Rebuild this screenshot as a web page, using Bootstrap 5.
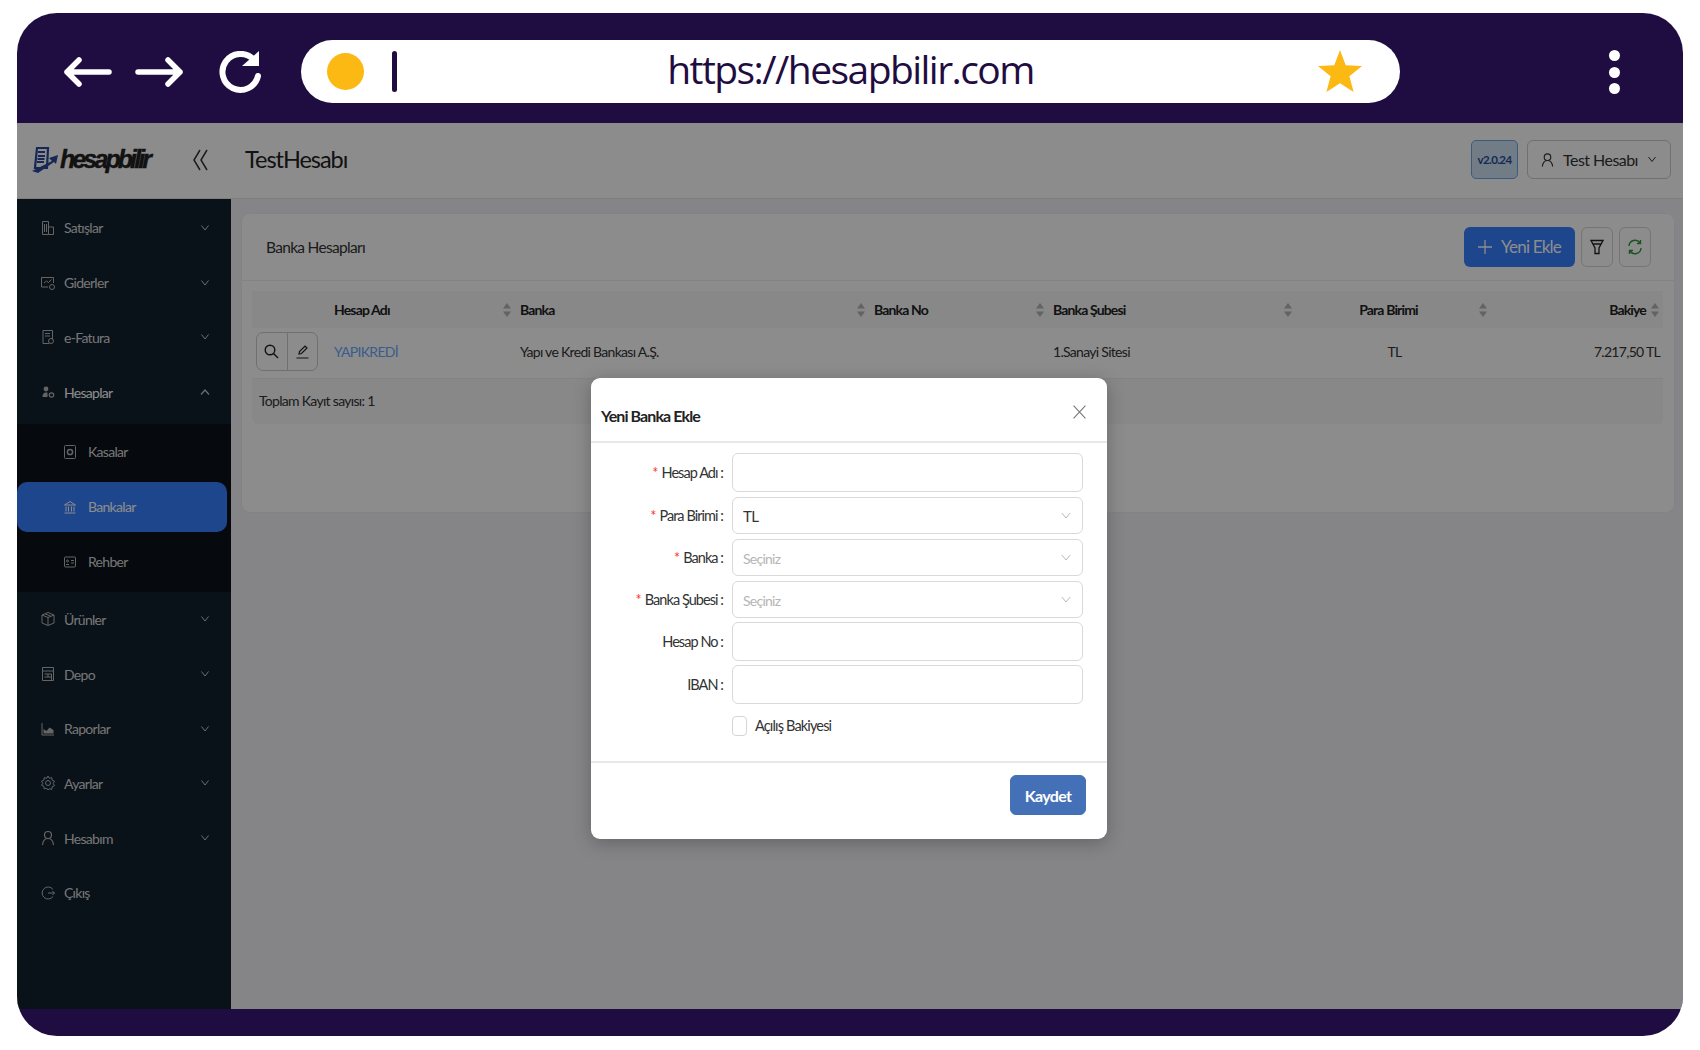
<!doctype html>
<html lang="tr">
<head>
<meta charset="utf-8">
<title>hesapbilir</title>
<link href="https://cdn.jsdelivr.net/npm/bootstrap@5.3.0/dist/css/bootstrap.min.css" rel="stylesheet">
<style>
html,body{height:100%}
body{background:#fff;padding:13px 17px 14px;font-family:Lato,"Liberation Sans",sans-serif;font-size:14px;letter-spacing:-.7px;color:#222;overflow:hidden}
.frame{height:1023px;background:#1f0d42;border-radius:40px;overflow:hidden}
.chrome{height:110px;padding:27px 0 0 47px}
.nav-ico{display:block}
.addr{width:1099px;height:63px;margin-left:39px;background:#fff;border-radius:32px;padding:0 0 0 26px;position:relative}
.dot-y{width:37px;height:37px;border-radius:50%;background:#fdb913}
.caret-v{width:5px;height:41px;border-radius:3px;background:#1f0d42;margin-left:28px}
.url{position:absolute;left:0;right:0;top:0;bottom:0;margin:0;text-align:center;line-height:57px;font-family:"Open Sans",sans-serif;font-size:39px;letter-spacing:-1.55px;color:#1f0d42}
.star-b{position:absolute;left:1016px;top:8px}
.kebab{margin-left:209px;padding-top:10px}
.kebab span{display:block;width:11px;height:11px;border-radius:50%;background:#fff;margin-bottom:5.5px}
.app{height:886px;position:relative;background:#f2f2f6}
.dim{position:absolute;inset:0;background:rgba(0,0,0,.45);z-index:5}
.topbar{height:76px;background:#fff;border-bottom:1px solid #e5e5e5;padding:0 12px 2px 15px}
.logo-txt{font-family:"Liberation Sans",sans-serif;font-weight:700;font-style:italic;font-size:25px;letter-spacing:-2.9px;color:#222;margin-left:2px;line-height:1;-webkit-text-stroke:.4px #222}
.collapse-ico{margin-left:43px}
.org{margin-left:36px;font-size:23.5px;letter-spacing:-1.05px;font-weight:400;color:#222}
.ver{width:47px;height:39px;border:1px solid #6ea8e0;border-radius:5px;background:#cfe2f5;color:#2a4a9a;font-size:11.5px;font-weight:700;letter-spacing:-.6px}
.user-btn{width:144px;height:39px;margin-left:9px;border:1px solid #ccc;border-radius:6px;font-size:16px;letter-spacing:-.55px;color:#333;background:#fff}
.side{width:214px;background:#12202f;padding-top:1.5px;color:#d8d8d8;font-size:14px}
.mi{height:54.7px;padding:0 20px 0 23px}
.mi svg.ico{margin-right:8px;color:#b9b9b9}
.mi.open{color:#fff;height:59.500px;padding-bottom:4px}
.sub{background:#0b1219;padding:3px 0 0;height:168px}
.si{height:50px;margin:0 4px 5px 0;padding:0 0 1px 47px;border-radius:10px}
.si svg{margin-right:12px;color:#b9b9b9}
.si.active{background:#3880ff;color:#fff}
.si.active svg{color:#fff}
.chev{margin-left:auto;color:#c8c8c8}
.main-a{padding:14px 8px 0 10px}
.panel{height:300px;background:#fff;border:1px solid #eee;border-radius:9px}
.panel-h{height:67px;padding:0 23px 2px 24px;border-bottom:1px solid #eee}
.panel-t{font-size:15.5px;letter-spacing:-.7px;color:#333;margin-top:3px}
.new-btn{width:111px;height:40px;background:#3880ff;color:#fff;border-radius:6px;font-size:17px;letter-spacing:-.8px;margin-top:2px}
.new-btn svg{margin-right:9px}
.sq-btn{width:32px;height:40px;border:1px solid #d5d5d5;border-radius:6px;background:#fff;margin:2px 0 0 6px}
.tbl-w{padding:10px 11px 0 10px}
table.tb{table-layout:fixed;width:1411px;margin:0;font-size:14px}
table.tb th{height:37px;background:#f7f7f7;font-weight:700;padding:0 5px;vertical-align:middle;border:0;color:#222;position:relative;font-size:14px;letter-spacing:-.85px}
table.tb td{height:50px;padding:0 5px 2px;vertical-align:middle;border-bottom:1px solid #eee;color:#333}
table.tb td.lnk{color:#6aa8ff}
.sort{position:absolute;right:4px;top:12px;display:block}
.acts{width:62px;height:39px;border:1px solid #ccc;border-radius:7px;margin-left:-1px}
.acts span{flex:1;height:100%}
.acts span+span{border-left:1px solid #ccc}
.tot{height:45px;background:#f7f7f7;padding:0 7px 2px;border-radius:0 0 6px 6px;font-size:14px;color:#333}
.dlg{position:absolute;left:574px;top:255px;width:516px;height:461px;z-index:6;background:#fff;border:0;border-radius:9px;box-shadow:0 4px 18px rgba(0,0,0,.25)}
.dlg .modal-header{height:65px;padding:0 0 0 10px;border-bottom:2px solid #e8e8e8;align-items:flex-start}
.dlg .modal-title{font-size:16px;font-weight:700;letter-spacing:-.9px;color:#222;margin-top:26px;line-height:24px}
.x-btn{margin:27px 21px 0 auto;border:0;background:none;padding:0;line-height:0}
.dlg .modal-body{height:318px;flex:none;padding:10px 23px 0 0}
.fr{margin:0 0 5px;align-items:center}
.fr.tight{margin-bottom:4px}
.fl{width:132px;padding:0;flex:none;text-align:right;font-size:14.5px;letter-spacing:-.95px;color:#333}
.fl i{color:#f33;font-style:normal;margin-right:4px}
.fv{width:351px;margin-left:9px;padding:0;flex:none}
.fv .form-control{height:39px;border:1px solid #d9d9d9;border-radius:6px;padding:0 11px}
.fv .form-select{height:37px;border:1px solid #d9d9d9;border-radius:6px;padding:2px 10px 0;font-size:15px;letter-spacing:-.5px;color:#333;
background-image:url("data:image/svg+xml,%3Csvg xmlns='http://www.w3.org/2000/svg' viewBox='0 0 12 8'%3E%3Cpath d='M1 1l5 6 5-6' fill='none' stroke='%23aaa' stroke-width='1'/%3E%3C/svg%3E");background-size:10px 7px;background-position:right 11px center}
.fv .form-select.ph{color:#b5b5b5;font-size:14px;letter-spacing:-.75px}
.cb-row{margin:12px 0 0 141px;height:20px}
.cb-row .form-check-input{width:15px;height:20px;margin:0;border:1px solid #d5d5d5;border-radius:4px;float:none}
.cb-row label{margin-left:8px;font-size:14.5px;letter-spacing:-.85px;color:#333}
.dlg .modal-footer{border-top:2px solid #e8e8e8;padding:12px 21px 0 0;height:78px;align-items:flex-start;flex:none}
.save-b{width:76px;height:40px;margin:0;padding:2px 0 0;background:#4470b8;border-color:#4470b8;font-size:16px;letter-spacing:-.7px;font-weight:700;border-radius:6px}
.bot{height:27px}
</style>
</head>
<body>
<svg width="0" height="0" class="position-absolute">
<defs>
<symbol id="i-ch" viewBox="0 0 12 8"><path d="M2.500 1.500l3.500 4.500 3.500-4.500" fill="none" stroke="currentColor" stroke-width="1"/></symbol>
<symbol id="i-up" viewBox="0 0 12 8"><path d="M2 6.500l4-4.500 4 4.500" fill="none" stroke="currentColor" stroke-width="1.200"/></symbol>
<symbol id="i-sort" viewBox="0 0 8 14"><path d="M4 0l4 5.500H0zM4 14L0 8.500h8z" fill="#b5b5b5"/></symbol>
<symbol id="i-user" viewBox="0 0 16 16"><circle cx="8" cy="5" r="3.500" fill="none" stroke="currentColor" stroke-width="1.200"/><path d="M2.500 15c.4-4 2.300-6.500 5.500-6.500s5.100 2.500 5.500 6.500" fill="none" stroke="currentColor" stroke-width="1.200"/></symbol>
</defs>
</svg>
<div class="frame d-flex flex-column">
  <div class="chrome d-flex align-items-start">
    <svg class="nav-ico" width="48" height="30" viewBox="0 0 48 30" style="margin-top:17px"><path d="M15 3L3 15l12 12M3 15h42" fill="none" stroke="#fff" stroke-width="5.500" stroke-linecap="round" stroke-linejoin="round"/></svg>
    <svg class="nav-ico" width="48" height="30" viewBox="0 0 48 30" style="margin:17px 0 0 23px"><path d="M33 3l12 12-12 12M45 15H3" fill="none" stroke="#fff" stroke-width="5.500" stroke-linecap="round" stroke-linejoin="round"/></svg>
    <svg class="nav-ico" width="44" height="42" viewBox="0 0 44 42" style="margin:11px 0 0 35px"><path d="M36 9A18 18 0 1 0 40 25" fill="none" stroke="#fff" stroke-width="6" stroke-linecap="round"/><path d="M24 15h17V0z" fill="#fff"/></svg>
    <div class="addr d-flex align-items-center">
      <div class="dot-y"></div>
      <div class="caret-v"></div>
      <p class="url">https://hesapbilir.com</p>
      <svg class="star-b" width="46" height="46" viewBox="0 0 24 24"><path d="M12 1l3 8 8.500.4-6.600 5.400 2.200 8.200L12 18.400 4.900 23l2.200-8.200L.5 9.400 9 9z" fill="#fdb913"/></svg>
    </div>
    <div class="kebab"><span></span><span></span><span></span></div>
  </div>
  <div class="app d-flex flex-column">
    <div class="topbar d-flex align-items-center flex-shrink-0">
      <svg width="26" height="28" viewBox="0 0 26 28"><path d="M5 2h11l-1 20H3z" fill="none" stroke="#2a4a9a" stroke-width="2.200"/><path d="M6 6h7M6 10h7M5.500 13h7M5 16h7" stroke="#2a4a9a" stroke-width="1.800"/><path d="M0 25l20-10-3-3 9-3-2 9-2-2-16 11z" fill="#2a4a9a"/></svg>
      <span class="logo-txt">hesapbilir</span>
      <svg class="collapse-ico" width="17" height="22" viewBox="0 0 17 22"><path d="M8 1L2 11l6 10M15 1L9 11l6 10" fill="none" stroke="#333" stroke-width="1.500"/></svg>
      <span class="org">TestHesabı</span>
      <div class="ver ms-auto d-flex align-items-center justify-content-center">v2.0.24</div>
      <div class="user-btn d-flex align-items-center justify-content-center"><svg width="15" height="16" class="me-2"><use href="#i-user"/></svg>Test Hesabı<svg width="12" height="9" class="ms-2"><use href="#i-ch"/></svg></div>
    </div>
    <div class="d-flex flex-grow-1" style="min-height:0">
      <nav class="side flex-shrink-0">
        <div class="mi d-flex align-items-center"><svg class="ico" width="16" height="16" viewBox="0 0 16 16" fill="none" stroke="currentColor"><path d="M2.500 1.500h6v13h-6zM8.500 7h5v7.500h-5M4.500 4v8M6.500 4v8"/></svg>Satışlar<svg class="chev" width="12" height="8"><use href="#i-ch"/></svg></div>
        <div class="mi d-flex align-items-center"><svg class="ico" width="16" height="16" viewBox="0 0 16 16" fill="none" stroke="currentColor"><path d="M8 12H1.500V2.500h12V8M4 8l2.500-2 2 1.500 3-3"/><circle cx="12" cy="12" r="2.500"/></svg>Giderler<svg class="chev" width="12" height="8"><use href="#i-ch"/></svg></div>
        <div class="mi d-flex align-items-center"><svg class="ico" width="16" height="16" viewBox="0 0 16 16" fill="none" stroke="currentColor"><path d="M9 14.500H3v-13h9.500V10M5 4.500h5M5 7h5"/><circle cx="11" cy="12" r="2.500"/></svg>e-Fatura<svg class="chev" width="12" height="8"><use href="#i-ch"/></svg></div>
        <div class="mi open d-flex align-items-center"><svg class="ico" width="16" height="16" viewBox="0 0 16 16" fill="currentColor"><circle cx="6" cy="5" r="2.400"/><path d="M2.500 13c0-3 1.200-4.500 3.500-4.500.8 0 1.500.2 1.500.2V13z"/><circle cx="11.500" cy="11" r="2.200" fill="none" stroke="currentColor" stroke-width="1.200"/></svg>Hesaplar<svg class="chev" width="12" height="8"><use href="#i-up"/></svg></div>
        <div class="sub">
          <div class="si d-flex align-items-center"><svg width="12" height="14" viewBox="0 0 12 14" fill="none" stroke="currentColor"><rect x=".5" y=".5" width="11" height="13" rx="1"/><circle cx="6" cy="7" r="2.600" stroke-width="1.500"/></svg>Kasalar</div>
          <div class="si active d-flex align-items-center"><svg width="12" height="14" viewBox="0 0 12 14" fill="none" stroke="currentColor"><path d="M.5 5L6 1.500 11.500 5zM2 6.500v5M4.500 6.500v5M7.500 6.500v5M10 6.500v5M.5 13h11"/></svg>Bankalar</div>
          <div class="si d-flex align-items-center"><svg width="12" height="14" viewBox="0 0 12 14" fill="none" stroke="currentColor"><rect x=".5" y="2" width="11" height="10" rx="1"/><circle cx="3.500" cy="6" r="1"/><path d="M2 9.500h3M7 5.500h3M7 8h3"/></svg>Rehber</div>
        </div>
        <div class="mi d-flex align-items-center"><svg class="ico" width="16" height="16" viewBox="0 0 16 16" fill="none" stroke="currentColor"><path d="M8 1.500l6 2.500v8l-6 2.500L2 12V4zM2 4l6 2.500L14 4M8 6.500v8M5 2.800l6 2.500"/></svg>Ürünler<svg class="chev" width="12" height="8"><use href="#i-ch"/></svg></div>
        <div class="mi d-flex align-items-center"><svg class="ico" width="16" height="16" viewBox="0 0 16 16" fill="none" stroke="currentColor"><path d="M2.500 1.500h11v13h-11zM2.500 5h11M4.500 8h7v6.500h-7M8 8v3M4.500 11h7"/></svg>Depo<svg class="chev" width="12" height="8"><use href="#i-ch"/></svg></div>
        <div class="mi d-flex align-items-center"><svg class="ico" width="16" height="16" viewBox="0 0 16 16" fill="currentColor"><path d="M2 2v12h12" fill="none" stroke="currentColor"/><path d="M3.500 12.500V8l3 2 3-3.500 4 2.500v3.500z"/></svg>Raporlar<svg class="chev" width="12" height="8"><use href="#i-ch"/></svg></div>
        <div class="mi d-flex align-items-center"><svg class="ico" width="16" height="16" viewBox="0 0 16 16" fill="none" stroke="currentColor"><path d="M8 1l1.200 2.200 2.600-.5.300 2.500 2.400 1.100L13.200 8.500l1.300 2.200-2.400 1.100-.3 2.500-2.600-.5L8 15l-1.200-1.700-2.600.5-.3-2.500-2.400-1.100L2.800 8.500 1.500 6.300l2.400-1.100.3-2.500 2.600.5z"/><circle cx="8" cy="8" r="2.500"/></svg>Ayarlar<svg class="chev" width="12" height="8"><use href="#i-ch"/></svg></div>
        <div class="mi d-flex align-items-center"><svg class="ico" width="16" height="16"><use href="#i-user"/></svg>Hesabım<svg class="chev" width="12" height="8"><use href="#i-ch"/></svg></div>
        <div class="mi d-flex align-items-center"><svg class="ico" width="16" height="16" viewBox="0 0 16 16" fill="none" stroke="currentColor"><path d="M13 4.500A6 6 0 1 0 13 11.500M8 8h6.500M12.500 6l2 2-2 2"/></svg>Çıkış</div>
      </nav>
      <main class="main-a flex-grow-1">
        <section class="panel">
          <div class="panel-h d-flex align-items-center">
            <span class="panel-t">Banka Hesapları</span>
            <div class="new-btn ms-auto d-flex align-items-center justify-content-center"><svg width="14" height="14" viewBox="0 0 14 14"><path d="M7 0v14M0 7h14" stroke="#fff" stroke-width="1.300"/></svg>Yeni Ekle</div>
            <div class="sq-btn d-flex align-items-center justify-content-center"><svg width="14" height="16" viewBox="0 0 14 16" fill="none" stroke="#222" stroke-width="1.300"><path d="M1 1.500h12L9 9v5.500H5V9zM3 5h8"/></svg></div>
            <div class="sq-btn d-flex align-items-center justify-content-center"><svg width="16" height="18" viewBox="0 0 16 18" fill="none" stroke="#2e9a3c" stroke-width="1.400"><path d="M2 8a6 6 0 0 1 11-3M14 10a6 6 0 0 1-11 3M13.500 2v3.500H10M2.500 16v-3.500H6"/></svg></div>
          </div>
          <div class="tbl-w">
            <table class="table tb">
              <colgroup><col style="width:77px"><col style="width:186px"><col style="width:354px"><col style="width:179px"><col style="width:248px"><col style="width:195px"><col style="width:172px"></colgroup>
              <thead><tr>
                <th></th>
                <th>Hesap Adı<svg class="sort" width="8" height="14"><use href="#i-sort"/></svg></th>
                <th>Banka<svg class="sort" width="8" height="14"><use href="#i-sort"/></svg></th>
                <th>Banka No<svg class="sort" width="8" height="14"><use href="#i-sort"/></svg></th>
                <th>Banka Şubesi<svg class="sort" width="8" height="14"><use href="#i-sort"/></svg></th>
                <th class="text-center" style="padding-right:15px">Para Birimi<svg class="sort" width="8" height="14"><use href="#i-sort"/></svg></th>
                <th class="text-end" style="padding-right:17px">Bakiye<svg class="sort" width="8" height="14"><use href="#i-sort"/></svg></th>
              </tr></thead>
              <tbody><tr>
                <td><div class="acts d-flex align-items-center"><span class="d-flex align-items-center justify-content-center"><svg width="15" height="15" viewBox="0 0 15 15" fill="none" stroke="#222" stroke-width="1.400"><circle cx="6" cy="6" r="4.800"/><path d="M9.500 9.500L14 14"/></svg></span><span class="d-flex align-items-center justify-content-center"><svg width="15" height="15" viewBox="0 0 15 15" fill="none" stroke="#222" stroke-width="1.200"><path d="M4 10l.5-2.500L10 2l2 2-5.500 5.500zM1.500 14h12"/></svg></span></div></td>
                <td class="lnk">YAPIKREDİ</td>
                <td>Yapı ve Kredi Bankası A.Ş.</td>
                <td></td>
                <td>1.Sanayi Sitesi</td>
                <td class="text-center" style="padding-left:7px">TL</td>
                <td class="text-end" style="padding-right:3px">7.217,50 TL</td>
              </tr></tbody>
            </table>
            <div class="tot d-flex align-items-center">Toplam Kayıt sayısı: 1</div>
          </div>
        </section>
      </main>
    </div>
    <div class="dim"></div>
    <div class="modal-content dlg">
      <div class="modal-header">
        <h5 class="modal-title">Yeni Banka Ekle</h5>
        <button type="button" class="x-btn" aria-label="Kapat"><svg width="13" height="14" viewBox="0 0 12 13"><path d="M.5.500l11 12M11.500.5l-11 12" stroke="#777" stroke-width="1"/></svg></button>
      </div>
      <div class="modal-body">
        <div class="row fr"><label class="fl"><i>*</i>Hesap Adı :</label><div class="fv"><input class="form-control" type="text"></div></div>
        <div class="row fr"><label class="fl"><i>*</i>Para Birimi :</label><div class="fv"><select class="form-select"><option>TL</option></select></div></div>
        <div class="row fr"><label class="fl"><i>*</i>Banka :</label><div class="fv"><select class="form-select ph"><option>Seçiniz</option></select></div></div>
        <div class="row fr tight"><label class="fl"><i>*</i>Banka Şubesi :</label><div class="fv"><select class="form-select ph"><option>Seçiniz</option></select></div></div>
        <div class="row fr tight"><label class="fl">Hesap No :</label><div class="fv"><input class="form-control" type="text"></div></div>
        <div class="row fr tight"><label class="fl">IBAN :</label><div class="fv"><input class="form-control" type="text"></div></div>
        <div class="cb-row d-flex align-items-center"><input class="form-check-input" type="checkbox" id="acilis"><label for="acilis">Açılış Bakiyesi</label></div>
      </div>
      <div class="modal-footer"><button type="button" class="btn btn-primary save-b">Kaydet</button></div>
    </div>
  </div>
  <div class="bot"></div>
</div>
<script src="https://cdn.jsdelivr.net/npm/bootstrap@5.3.0/dist/js/bootstrap.bundle.min.js"></script>
</body>
</html>
